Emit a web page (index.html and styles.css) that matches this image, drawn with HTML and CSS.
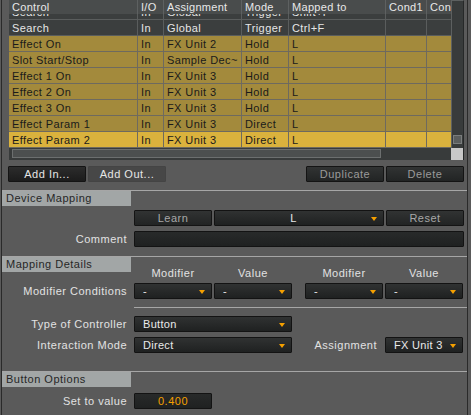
FILE: index.html
```html
<!DOCTYPE html>
<html>
  <head>
    <meta charset="utf-8">
    <title>Controller Manager</title>
    <link rel="stylesheet" href="styles.css">
  </head>
  <body>
    <div class="window">
      <!-- mapping table -->
      <div class="grid">
        <div class="table">
          <div class="row head">
            <div class="cell">Control</div>
            <div class="cell">I/O</div>
            <div class="cell">Assignment</div>
            <div class="cell">Mode</div>
            <div class="cell">Mapped to</div>
            <div class="cell">Cond1</div>
            <div class="cell">Cond2</div>
          </div>
          <div class="body">
            <div class="rows">
              <div class="row dark">
                <div class="cell">Search</div><div class="cell">In</div><div class="cell">Global</div><div class="cell">Trigger</div><div class="cell">Shift+F</div><div class="cell"></div><div class="cell"></div>
              </div>
              <div class="row dark">
                <div class="cell">Search</div><div class="cell">In</div><div class="cell">Global</div><div class="cell">Trigger</div><div class="cell">Ctrl+F</div><div class="cell"></div><div class="cell"></div>
              </div>
              <div class="row gold">
                <div class="cell">Effect On</div><div class="cell">In</div><div class="cell">FX Unit 2</div><div class="cell">Hold</div><div class="cell">L</div><div class="cell"></div><div class="cell"></div>
              </div>
              <div class="row gold">
                <div class="cell">Slot Start/Stop</div><div class="cell">In</div><div class="cell">Sample Dec~</div><div class="cell">Hold</div><div class="cell">L</div><div class="cell"></div><div class="cell"></div>
              </div>
              <div class="row gold">
                <div class="cell">Effect 1 On</div><div class="cell">In</div><div class="cell">FX Unit 3</div><div class="cell">Hold</div><div class="cell">L</div><div class="cell"></div><div class="cell"></div>
              </div>
              <div class="row gold">
                <div class="cell">Effect 2 On</div><div class="cell">In</div><div class="cell">FX Unit 3</div><div class="cell">Hold</div><div class="cell">L</div><div class="cell"></div><div class="cell"></div>
              </div>
              <div class="row gold">
                <div class="cell">Effect 3 On</div><div class="cell">In</div><div class="cell">FX Unit 3</div><div class="cell">Hold</div><div class="cell">L</div><div class="cell"></div><div class="cell"></div>
              </div>
              <div class="row gold">
                <div class="cell">Effect Param 1</div><div class="cell">In</div><div class="cell">FX Unit 3</div><div class="cell">Direct</div><div class="cell">L</div><div class="cell"></div><div class="cell"></div>
              </div>
              <div class="row gold selected">
                <div class="cell">Effect Param 2</div><div class="cell">In</div><div class="cell">FX Unit 3</div><div class="cell">Direct</div><div class="cell">L</div><div class="cell"></div><div class="cell"></div>
              </div>
            </div>
          </div>
        </div>
        <div class="vscroll"><div class="vthumb"></div></div>
      </div>
      <div class="hbar">
        <div class="hscroll"><div class="hthumb"></div></div>
        <div class="corner"></div>
      </div>

      <!-- buttons under the table -->
      <div class="actions">
        <div class="btn-group">
          <div class="btn btn-add">Add In...</div>
          <div class="btn btn-flat">Add Out...</div>
        </div>
        <div class="btn-group">
          <div class="btn">Duplicate</div>
          <div class="btn">Delete</div>
        </div>
      </div>

      <!-- Device Mapping -->
      <div class="section">
        <div class="section-title">Device Mapping</div>
        <div class="form-row first">
          <div class="label"></div>
          <div class="controls">
            <div class="btn btn-light">Learn</div>
            <div class="dropdown wide centered"><span class="dd-text">L</span></div>
            <div class="btn btn-light">Reset</div>
          </div>
        </div>
        <div class="form-row">
          <div class="label">Comment</div>
          <div class="controls">
            <div class="input comment"></div>
          </div>
        </div>
      </div>

      <!-- Mapping Details -->
      <div class="section details">
        <div class="section-title">Mapping Details</div>
        <div class="form-row col-heads">
          <div class="label"></div>
          <div class="controls pairs">
            <div class="pair"><span>Modifier</span><span>Value</span></div>
            <div class="pair"><span>Modifier</span><span>Value</span></div>
          </div>
        </div>
        <div class="form-row cond">
          <div class="label">Modifier Conditions</div>
          <div class="controls pairs">
            <div class="pair">
              <div class="dropdown"><span class="dd-text">-</span></div>
              <div class="dropdown"><span class="dd-text">-</span></div>
            </div>
            <div class="pair">
              <div class="dropdown"><span class="dd-text">-</span></div>
              <div class="dropdown"><span class="dd-text">-</span></div>
            </div>
          </div>
        </div>
        <div class="divider"></div>
        <div class="form-row type">
          <div class="label">Type of Controller</div>
          <div class="controls">
            <div class="dropdown double"><span class="dd-text">Button</span></div>
          </div>
        </div>
        <div class="form-row">
          <div class="label">Interaction Mode</div>
          <div class="controls">
            <div class="dropdown double"><span class="dd-text">Direct</span></div>
            <div class="side-label">Assignment</div>
            <div class="dropdown"><span class="dd-text">FX Unit 3</span></div>
          </div>
        </div>
      </div>

      <!-- Button Options -->
      <div class="section options">
        <div class="section-title">Button Options</div>
        <div class="form-row first">
          <div class="label">Set to value</div>
          <div class="controls">
            <div class="input value">0.400</div>
          </div>
        </div>
      </div>
    </div>
  </body>
</html>
```

FILE: styles.css
```css
/* base */

body {
  margin: 0;
  width: 471px;
  height: 415px;
  overflow: hidden;
  background-color: #5a5a5a;
  color: #e2e2e2;
  font-family: "Liberation Sans", Arial, sans-serif;
  font-size: 11px;
  letter-spacing: 0.5px;
}

.window {
  margin-left: 1px;
  width: 465px;
  height: 415px;
  border-left: 1px solid #2a2a2a;
  border-right: 1px solid #2a2a2a;
}

/* table */

.grid {
  display: flex;
  margin-left: 7px;
  width: 455px;
}
.table {
  width: 442px;
}
.row {
  display: grid;
  grid-template-columns: 129px 26px 78px 47px 97px 41px 24px;
}
.cell {
  height: 15px;
  line-height: 17px;
  padding-left: 3px;
  white-space: nowrap;
  overflow: hidden;
  border-right: 1px solid #5a5d5d;
  letter-spacing: 0.4px;
}
.cell:last-child {
  border-right: 0;
}
.head {
  background-color: #494c4c;
  color: #e8e8e8;
}
.head .cell {
  height: 14px;
  line-height: 14px;
  letter-spacing: 0.3px;
  border-right-color: #5e6161;
}
.body {
  height: 134px;
  overflow: hidden;
  background-color: #3a3d3d;
}
.rows {
  margin-top: -10px;  /* list is scrolled a little */
}
.row.dark,
.row.gold {
  border-bottom: 1px solid #5a5d5d;
}
.row.dark {
  background-color: #3b3e3e;
  color: #e6e6e6;
}
.row.gold {
  background-color: #a38a3c;
  color: #1a1a1a;
  border-bottom-color: #6e6a5f;
}
.row.gold .cell {
  border-right-color: #6e6a5f;
}
.row.selected {
  background-color: #dab23d;
}

.vscroll {
  box-sizing: border-box;
  width: 13px;
  height: 148px;
  padding: 0 1px 4px 1px;
  display: flex;
  flex-direction: column;
  justify-content: flex-end;
  background-color: #383b3b;
  border-left: 1px solid #5d6060;
  border-top: 1px solid #5d6060;
  border-right: 1px solid #262828;
}
.vthumb {
  box-sizing: border-box;
  height: 9px;
  background-color: #5b5e5e;
  border: 1px solid #7a7d7d;
}

.hbar {
  display: flex;
  margin-left: 7px;
  height: 12px;
}
.hscroll {
  box-sizing: border-box;
  width: 442px;
  padding: 1px 0 0 3px;
  background-color: #383b3b;
}
.hthumb {
  box-sizing: border-box;
  width: 369px;
  height: 9px;
  background-color: #4c4f4f;
  border: 1px solid #6c6f6f;
}
.corner {
  width: 12px;
  background-color: #c8c8c8;
  border-right: 1px solid #262828;
}

/* buttons */

.actions {
  display: flex;
  justify-content: space-between;
  margin-top: 6px;
  padding: 0 3px 0 6px;
}
.btn-group {
  display: flex;
  gap: 2px;
}
.btn {
  box-sizing: border-box;
  width: 78px;
  height: 16px;
  line-height: 14px;
  text-align: center;
  color: #9a9a9a;
  background: linear-gradient(#313333, #222424);
  border: 1px solid #141414;
  border-radius: 1px;
}
.btn-add {
  color: #e6e6e6;
  background: linear-gradient(#2c2c2c, #1c1c1c);
}
.btn-flat {
  color: #e6e6e6;
  background: #474747;
  border-color: #444;
}
.btn-light {
  color: #a8a8a8;
}

/* sections */

.section {
  margin-top: 8px;
  border-top: 1px solid #a6a6a6;
}
.section-title {
  width: 125px;
  height: 15px;
  line-height: 15px;
  padding-left: 4px;
  background-color: #a2a6a6;
  color: #262626;
}
.details {
  margin-top: 9px;
}
.options {
  margin-top: 18px;
}

.form-row {
  display: flex;
  margin-top: 5px;
  height: 16px;
}
.form-row.first {
  margin-top: 4px;
}
.options .form-row.first {
  margin-top: 6px;
}
.label {
  width: 125px;
  margin-right: 7px;
  text-align: right;
  line-height: 16px;
  white-space: nowrap;
}
.controls {
  display: flex;
  gap: 2px;
}
.pairs {
  gap: 13px;
}
.pair {
  display: flex;
  gap: 2px;
}
.col-heads {
  margin-top: -6px;
  height: 14px;
}
.col-heads .pair span {
  width: 78px;
  text-align: center;
  line-height: 14px;
}
.form-row.cond {
  margin-top: 3px;
}
.divider {
  margin: 8px 0 0 132px;
  height: 1px;
  background-color: #a6a6a6;
}
.form-row.type {
  margin-top: 8px;
}
.side-label {
  width: 83px;
  margin-right: 6px;
  text-align: right;
  line-height: 16px;
}

/* dropdowns and inputs */

.dropdown {
  box-sizing: border-box;
  display: flex;
  align-items: center;
  width: 78px;
  height: 16px;
  padding-left: 8px;
  color: #eaeaea;
  letter-spacing: 0.3px;
  background: linear-gradient(#303232, #1f2121);
  border: 1px solid #131313;
  border-radius: 1px;
}
.dropdown::after {
  content: "";
  margin: 1px 6px 0 3px;
  border-left: 3.5px solid transparent;
  border-right: 3.5px solid transparent;
  border-top: 4px solid #f5a000;
}
.dd-text {
  flex: 1;
  white-space: nowrap;
  overflow: hidden;
}
.dropdown.wide {
  width: 170px;
}
.dropdown.wide::after {
  margin-left: 7px;
}
.dropdown.double {
  width: 158px;
}
.dropdown.centered .dd-text {
  text-align: center;
}

.input {
  box-sizing: border-box;
  height: 16px;
  line-height: 14px;
  background: linear-gradient(#282a2a, #1f2121);
  border: 1px solid #131313;
  border-radius: 1px;
}
.comment {
  width: 330px;
}
.value {
  width: 78px;
  text-align: center;
  color: #f5a000;
}
```
